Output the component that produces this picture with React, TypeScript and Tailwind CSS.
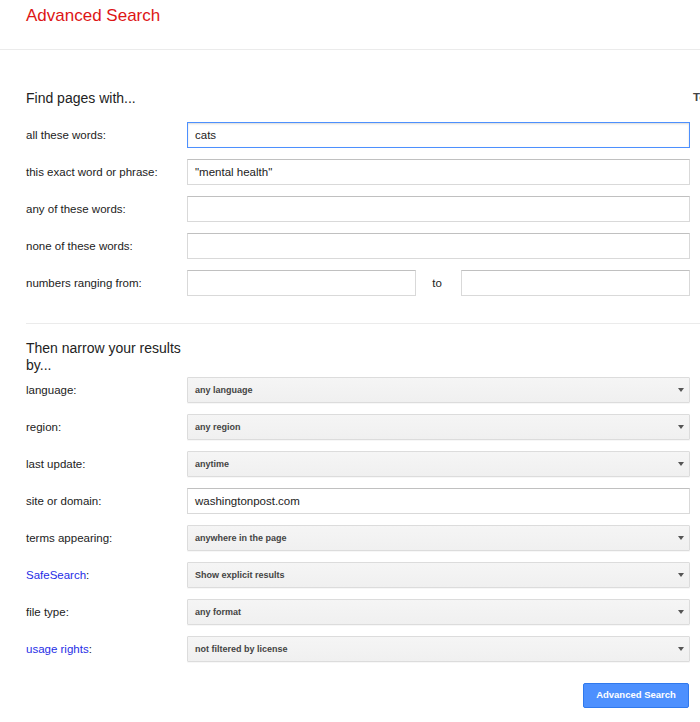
import React from "react";

const font = { fontFamily: '"Liberation Sans", Arial, sans-serif' };

function TextRow({ label, value, focused }: { label: React.ReactNode; value?: string; focused?: boolean }) {
  return (
    <div className="flex items-center h-[26px]">
      <div className="w-[161px] shrink-0 text-[11.5px] text-[#222] pt-[1px]">{label}</div>
      <div
        className={
          focused
            ? "w-[503px] shrink-0 h-[26px] border border-[#4d90fe] shadow-[inset_0_1px_2px_rgba(0,0,0,0.15)] flex items-center px-[7px] pt-[1px] text-[11.5px] text-[#222]"
            : "w-[503px] shrink-0 h-[26px] border border-[#d9d9d9] border-t-[#c0c0c0] flex items-center px-[7px] pt-[1px] text-[11.5px] text-[#222]"
        }
      >
        {value}
      </div>
    </div>
  );
}

function SelectRow({ label, value }: { label: React.ReactNode; value: string }) {
  return (
    <div className="flex items-center h-[26px]">
      <div className="w-[161px] shrink-0 text-[11.5px] text-[#222] pt-[1px]">{label}</div>
      <div className="w-[503px] shrink-0 h-[26px] border border-[#dcdcdc] rounded-[1px] bg-gradient-to-b from-[#f5f5f5] to-[#f0f0f0] flex items-center justify-between pl-[7px] pr-[5px] shadow-[0_1px_0_rgba(0,0,0,0.03)]">
        <span className="text-[9px] font-bold text-[#444] pt-[1px]">{value}</span>
        <span className="w-0 h-0 border-l-[3.5px] border-r-[3.5px] border-t-[4px] border-l-transparent border-r-transparent border-t-[#555]" />
      </div>
    </div>
  );
}

function Link({ children }: { children: React.ReactNode }) {
  return <span className="text-[#1f2ee6]">{children}</span>;
}

export default function App() {
  return (
    <div className="w-[700px] h-[722px] overflow-hidden bg-white" style={font}>
      <div className="w-[900px]">
        <div className="h-[50px] border-b border-[#ebebeb] pl-[26px] pt-[6px]">
          <div className="text-[17px] leading-[20px] text-[#dd1515]">Advanced Search</div>
        </div>

        <div className="pl-[26px] pt-[35px]">
          <div className="flex flex-col gap-[11px]">
            <div className="flex items-center h-[26px]">
              <div className="w-[664px] shrink-0 text-[14px] text-[#222]">Find pages with...</div>
              <div className="ml-[3px] text-[11.5px] font-bold text-[#444] whitespace-nowrap">To do this in the search box.</div>
            </div>
            <TextRow label="all these words:" value="cats" focused />
            <TextRow label="this exact word or phrase:" value={'"mental health"'} />
            <TextRow label="any of these words:" />
            <TextRow label="none of these words:" />
            <div className="flex items-center h-[26px]">
              <div className="w-[161px] shrink-0 text-[11.5px] text-[#222] pt-[1px]">numbers ranging from:</div>
              <div className="w-[229px] shrink-0 h-[26px] border border-[#d9d9d9] border-t-[#c0c0c0]" />
              <div className="w-[45px] shrink-0 text-center text-[11.5px] text-[#222] pt-[1px] pr-[3px]">to</div>
              <div className="w-[229px] shrink-0 h-[26px] border border-[#d9d9d9] border-t-[#c0c0c0]" />
            </div>
          </div>

          <div className="mt-[27px] h-px bg-[#ebebeb]" />

          <div className="pt-[16px] w-[161px] text-[14px] leading-[17px] text-[#222]">Then narrow your results by...</div>

          <div className="mt-[3px] flex flex-col gap-[11px]">
            <SelectRow label="language:" value="any language" />
            <SelectRow label="region:" value="any region" />
            <SelectRow label="last update:" value="anytime" />
            <TextRow label="site or domain:" value="washingtonpost.com" />
            <SelectRow label="terms appearing:" value="anywhere in the page" />
            <SelectRow label={<><Link>SafeSearch</Link>:</>} value="Show explicit results" />
            <SelectRow label="file type:" value="any format" />
            <SelectRow label={<><Link>usage rights</Link>:</>} value="not filtered by license" />
          </div>

          <div className="w-[664px] flex justify-end mt-[21px] pr-[1px]">
            <div className="h-[25px] w-[106px] bg-[#4d90fe] border border-[#3079ed] rounded-[2px] flex items-center justify-center text-[9.5px] font-bold text-white">
              Advanced Search
            </div>
          </div>
        </div>
      </div>
    </div>
  );
}
